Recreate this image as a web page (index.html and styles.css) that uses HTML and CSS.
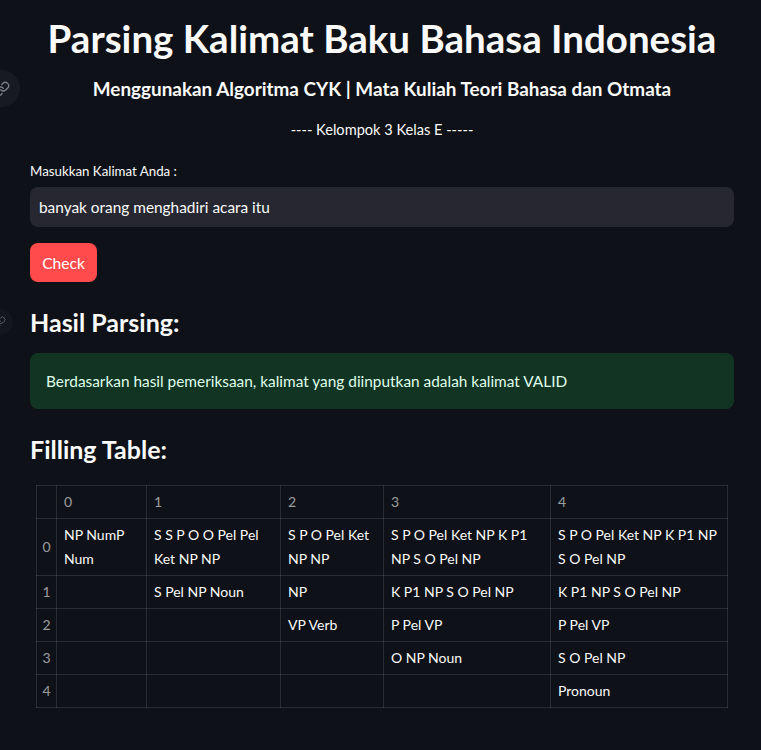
FILE: index.html
```html
<!DOCTYPE html>
<html lang="id">
<head>
<meta charset="utf-8">
<title>Parsing Kalimat Baku Bahasa Indonesia</title>
<link rel="stylesheet" href="styles.css">
</head>
<body>
<main class="main">
  <h1 class="title">Parsing Kalimat Baku Bahasa Indonesia</h1>
  <h3 class="subtitle">
    <span class="anchor anchor-lg"><svg viewBox="0 0 24 24" width="16" height="16"><path d="M10 13a5 5 0 0 0 7.54.54l3-3a5 5 0 0 0-7.07-7.07l-1.72 1.71"/><path d="M14 11a5 5 0 0 0-7.54-.54l-3 3a5 5 0 0 0 7.07 7.07l1.71-1.71"/></svg></span>
    Menggunakan Algoritma CYK | Mata Kuliah Teori Bahasa dan Otmata
  </h3>
  <p class="group">---- Kelompok 3 Kelas E -----</p>

  <label class="label" for="kalimat">Masukkan Kalimat Anda :</label>
  <input class="text-input" id="kalimat" type="text" value="banyak orang menghadiri acara itu">
  <button class="btn" type="button">Check</button>

  <h2 class="section">
    <span class="anchor anchor-sm"><svg viewBox="0 0 24 24" width="12" height="12"><path d="M10 13a5 5 0 0 0 7.54.54l3-3a5 5 0 0 0-7.07-7.07l-1.72 1.71"/><path d="M14 11a5 5 0 0 0-7.54-.54l-3 3a5 5 0 0 0 7.07 7.07l1.71-1.71"/></svg></span>
    Hasil Parsing:
  </h2>
  <div class="alert">Berdasarkan hasil pemeriksaan, kalimat yang diinputkan adalah kalimat VALID</div>

  <h2 class="section section-table">Filling Table:</h2>
  <table class="grid">
    <colgroup>
      <col class="c-idx"><col class="c0"><col class="c1"><col class="c2"><col class="c3"><col class="c4">
    </colgroup>
    <thead>
      <tr><th></th><th>0</th><th>1</th><th>2</th><th>3</th><th>4</th></tr>
    </thead>
    <tbody>
      <tr><th>0</th><td>NP NumP Num</td><td>S S P O O Pel Pel Ket NP NP</td><td>S P O Pel Ket NP NP</td><td>S P O Pel Ket NP K P1 NP S O Pel NP</td><td>S P O Pel Ket NP K P1 NP S O Pel NP</td></tr>
      <tr><th>1</th><td></td><td>S Pel NP Noun</td><td>NP</td><td>K P1 NP S O Pel NP</td><td>K P1 NP S O Pel NP</td></tr>
      <tr><th>2</th><td></td><td></td><td>VP Verb</td><td>P Pel VP</td><td>P Pel VP</td></tr>
      <tr><th>3</th><td></td><td></td><td></td><td>O NP Noun</td><td>S O Pel NP</td></tr>
      <tr><th>4</th><td></td><td></td><td></td><td></td><td>Pronoun</td></tr>
    </tbody>
  </table>
</main>
</body>
</html>
```

FILE: styles.css
```css
* { box-sizing: border-box; }

html, body {
  margin: 0;
  padding: 0;
  background: #0e1117;
  color: #fafafa;
  font-family: "Lato", "Noto Sans", sans-serif;
}

.main {
  display: flex;
  flex-direction: column;
  align-items: stretch;
  padding: 14px 27px 40px 30px;
}

.title {
  margin: 0;
  font-size: 38.5px;
  font-weight: 700;
  line-height: 49px;
  text-align: center;
  white-space: nowrap;
}

.subtitle {
  position: relative;
  margin: 14px 0 0;
  font-size: 18.9px;
  font-weight: 700;
  line-height: 24px;
  text-align: center;
}

.anchor {
  position: absolute;
  display: flex;
  align-items: center;
  justify-content: center;
  border-radius: 50%;
  background: #171a21;
}

.anchor svg {
  fill: none;
  stroke: rgba(250, 250, 250, 0.45);
  stroke-width: 2;
  stroke-linecap: round;
  stroke-linejoin: round;
}

.anchor-lg {
  left: -47px;
  top: -7px;
  width: 37px;
  height: 37px;
}

.anchor-sm {
  left: -43px;
  top: 3px;
  width: 26px;
  height: 26px;
  background: #13161c;
}

.anchor-sm svg { stroke: rgba(250, 250, 250, 0.3); }

.group {
  margin: 17px 0 0;
  font-size: 14.6px;
  line-height: 24px;
  text-align: center;
}

.label {
  margin-top: 19px;
  font-size: 13.3px;
  line-height: 20px;
}

.text-input {
  margin-top: 6px;
  height: 40px;
  width: 100%;
  border: none;
  border-radius: 8px;
  background: #262730;
  color: #fafafa;
  font-family: inherit;
  font-size: 15.4px;
  padding: 0 9px;
  outline: none;
}

.btn {
  align-self: flex-start;
  margin-top: 16px;
  height: 39px;
  width: 67px;
  padding: 0;
  border: none;
  border-radius: 8px;
  background: #ff4b4b;
  color: #ffffff;
  font-family: inherit;
  font-size: 15.6px;
}

.section {
  position: relative;
  margin: 24px 0 0;
  font-size: 25px;
  font-weight: 700;
  line-height: 32px;
}

.alert {
  margin-top: 15px;
  min-height: 56px;
  display: flex;
  align-items: center;
  padding: 0 16px;
  border-radius: 8px;
  background: rgba(33, 195, 84, 0.2);
  color: #dffde9;
  font-size: 15.4px;
}

.section-table { margin-top: 24px; }

.grid {
  margin: 20px 0 0 6px;
  width: 691px;
  table-layout: fixed;
  border-collapse: collapse;
  font-size: 14px;
  line-height: 24px;
}

.c-idx { width: 20px; }
.c0 { width: 90px; }
.c1 { width: 134px; }
.c2 { width: 103px; }
.c3 { width: 167px; }
.c4 { width: 177px; }

.grid th,
.grid td {
  border: 1px solid rgba(250, 250, 250, 0.12);
  padding: 4px 6px 4px 7px;
  text-align: left;
  vertical-align: middle;
  font-weight: 400;
}

.grid thead th,
.grid tbody th {
  color: rgba(250, 250, 250, 0.6);
}

.grid tbody th {
  padding: 4px 0;
  text-align: center;
}
```
